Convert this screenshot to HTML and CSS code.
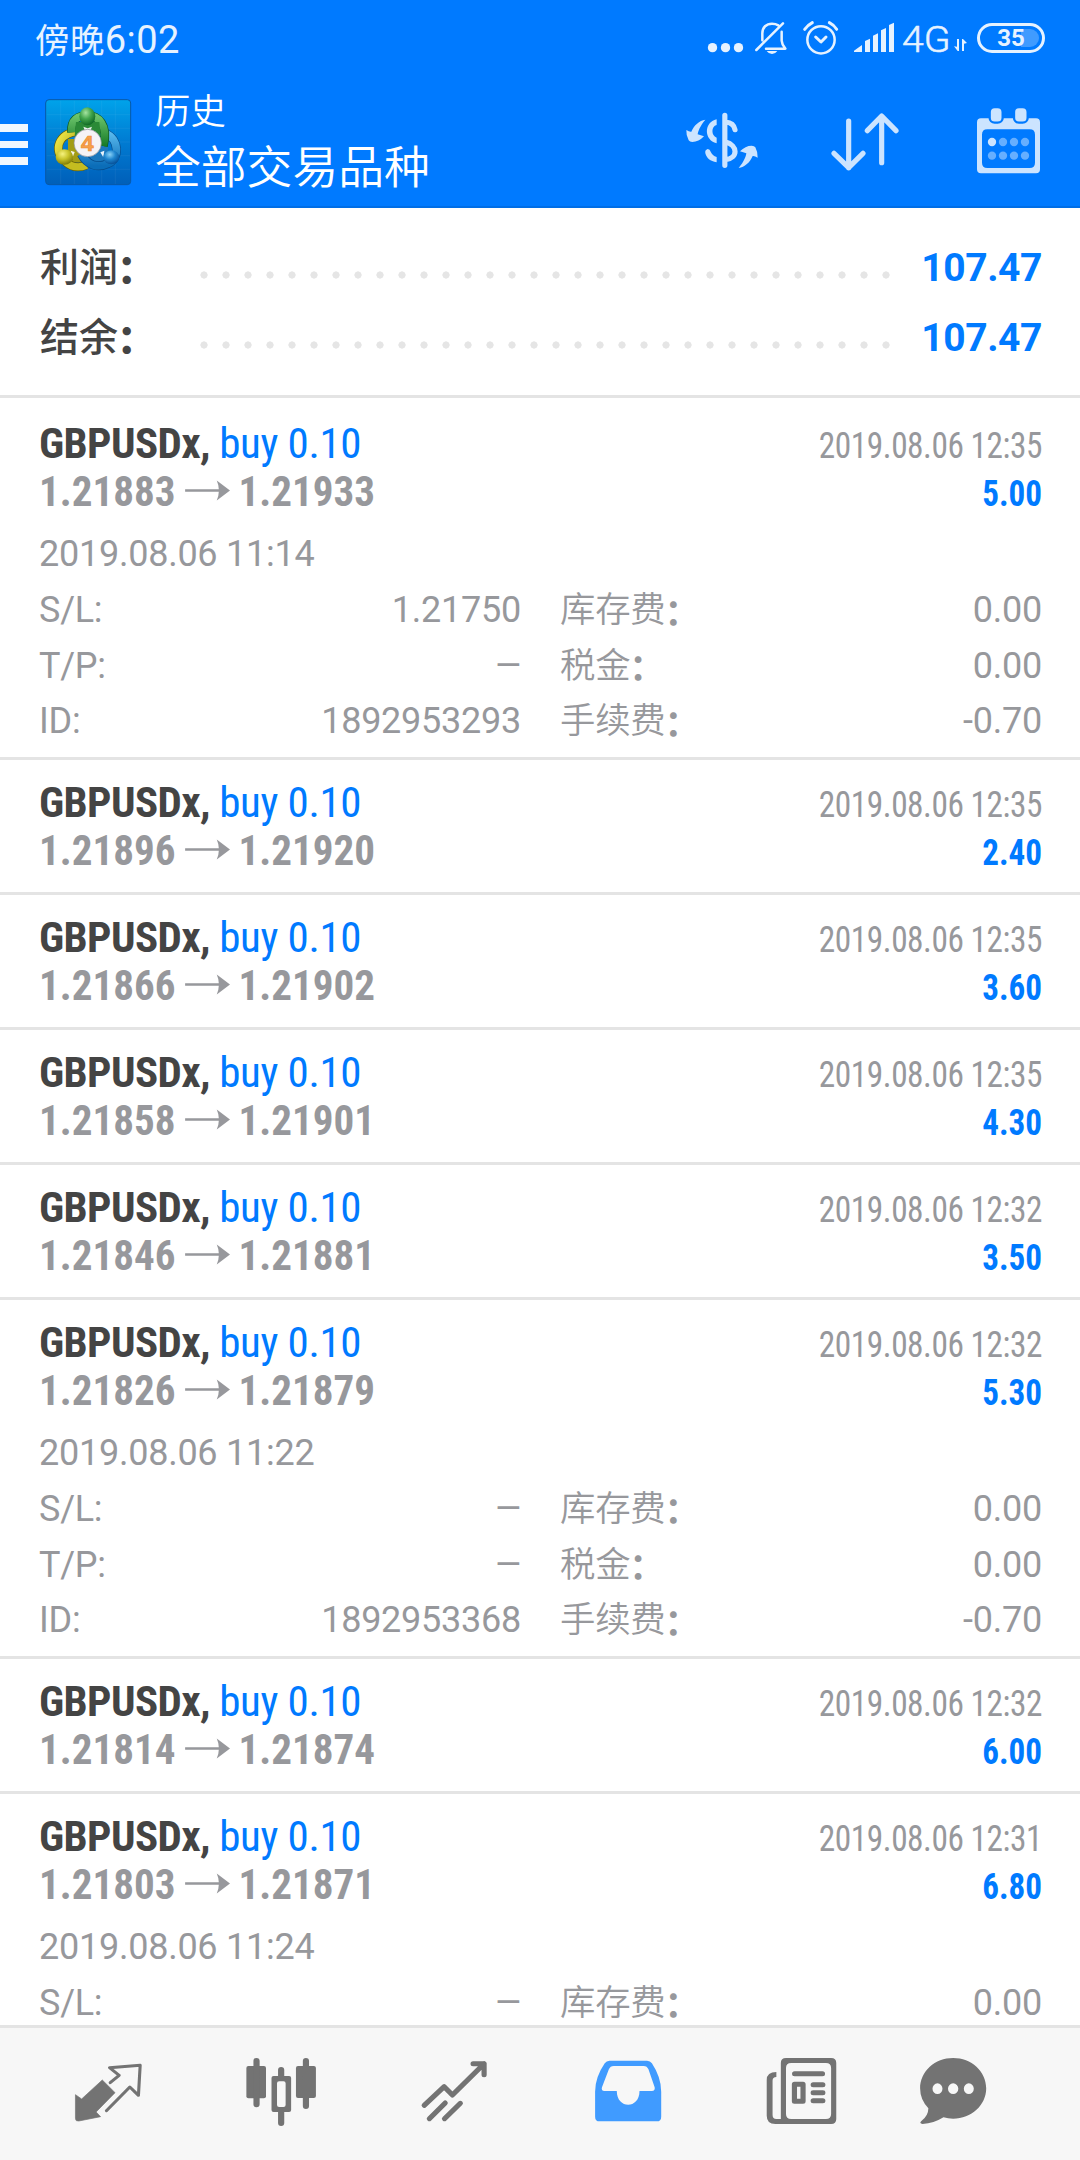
FILE: index.html
```html
<!DOCTYPE html>
<html lang="zh-CN">
<head>
<meta charset="utf-8">
<title>历史</title>
<link rel="stylesheet" href="styles.css">
</head>
<body>
<div class="app">
  <header class="header">
    <div class="status">
      <div class="clock"><span class="clock-period">傍晚</span>6:02</div>
      <div class="status-icons">
        <svg class="st-dots" viewBox="141 60 111 110"><circle cx="157.500" cy="143" r="14"/><circle cx="196.500" cy="143" r="14"/><circle cx="235.500" cy="143" r="14"/></svg>
        <svg class="st-bell" viewBox="282 60 102 110">
          <path class="line" d="M289 150 369 70M307 121V100C307 82 319 71 336 71Q347 71 355 76M365 95V122Q366 135 376 146H318"/>
          <path d="M320 153H352Q346 162 336 162T320 153Z"/>
        </svg>
        <svg class="st-alarm" viewBox="426 60 111 110">
          <circle class="line" cx="483" cy="119.500" r="41"/>
          <path class="line thick" d="M467 111 483 126 498 111"/>
          <path class="line thick" d="M434 88Q444 75 457 68M508 68Q522 75 530 88"/>
        </svg>
        <svg class="st-signal" viewBox="579 60 126 110"><path d="M582 156V152L606 135V156ZM615 156V123L630 116V156ZM639 156V107L654 100V156ZM663 156V91L678 84V156ZM687 156V75L702 68V156Z"/></svg>
        <span class="network">4G</span>
        <svg class="st-data" viewBox="879 60 45 110"><path d="M891 117H897V153H893L882 139 891 140ZM906 117H909L921 129 912 131V153H906Z"/></svg>
        <div class="battery"><span class="battery-text">35</span></div>
      </div>
    </div>
    <div class="toolbar">
      <div class="menu"><i></i><i></i><i></i></div>
      <svg class="logo" viewBox="12 12 264 264">
        <defs>
          <linearGradient id="tile" x1="0" y1="0" x2="0" y2="1"><stop offset="0" stop-color="#00a3ea"/><stop offset=".5" stop-color="#007bd2"/><stop offset="1" stop-color="#005fb9"/></linearGradient>
          <linearGradient id="green" x1="0" y1="0" x2="0" y2="1"><stop offset="0" stop-color="#6cc46b"/><stop offset="1" stop-color="#167a27"/></linearGradient>
          <linearGradient id="yellow" x1="0" y1="0" x2="1" y2="1"><stop offset="0" stop-color="#f2ea4a"/><stop offset="1" stop-color="#a59a0c"/></linearGradient>
          <linearGradient id="blue" x1="0" y1="0" x2="0" y2="1"><stop offset="0" stop-color="#58b8ec"/><stop offset="1" stop-color="#0b6db8"/></linearGradient>
          <radialGradient id="green-head" cx=".4" cy=".3" r=".7"><stop offset="0" stop-color="#a5e3a0"/><stop offset=".5" stop-color="#43a64d"/><stop offset="1" stop-color="#116a25"/></radialGradient>
          <radialGradient id="yellow-head" cx=".4" cy=".3" r=".7"><stop offset="0" stop-color="#f6f27e"/><stop offset=".5" stop-color="#c9c42a"/><stop offset="1" stop-color="#857f08"/></radialGradient>
          <radialGradient id="blue-head" cx=".4" cy=".3" r=".7"><stop offset="0" stop-color="#8bd2f7"/><stop offset=".5" stop-color="#1f86cf"/><stop offset="1" stop-color="#07519a"/></radialGradient>
        </defs>
        <rect x="17" y="17" width="255" height="255" rx="10" fill="url(#tile)" stroke="#0858a8" stroke-width="3"/>
        <path d="M62 20V270M103 20V270M144 20V270M185 20V270M226 20V270M20 62H270M20 103H270M20 144H270M20 185H270M20 226H270" stroke="#fff" stroke-opacity=".08" stroke-width="2"/>
        <path d="M84 135H120L135 195 118 206 84 204Z" fill="#a39c14"/>
        <path d="M204 135H170L150 195 176 206 204 204Z" fill="#1c78bd"/>
        <path d="M94 209C44 194 44 140 84 120Q98 112 114 114" fill="none" stroke="#665f05" stroke-width="26"/>
        <path d="M94 209C44 194 44 140 84 120Q98 112 114 114" fill="none" stroke="url(#yellow)" stroke-width="22"/>
        <path d="M76 203Q104 228 140 213" fill="none" stroke="#665f05" stroke-width="26"/>
        <path d="M76 203Q104 228 140 213" fill="none" stroke="#c4bc20" stroke-width="22"/>
        <path d="M196 118C240 136 238 195 205 208C172 224 142 213 124 180" fill="none" stroke="#064d8d" stroke-width="27"/>
        <path d="M196 118C240 136 238 195 205 208C172 224 142 213 124 180" fill="none" stroke="url(#blue)" stroke-width="23"/>
        <path d="M95 115C92 77 113 65 143 65S206 90 190 156" fill="none" stroke="#0b5420" stroke-width="27"/>
        <path d="M95 115C92 77 113 65 143 65S206 90 190 156" fill="none" stroke="url(#green)" stroke-width="23"/>
        <path d="M108 84H178L182 125H104Z" fill="#2b8a37"/>
        <path d="M130 98 143 103 156 98 152 108H134Z" fill="#e9f2ec"/>
        <path d="M92 170 104 174 98 190Z" fill="#f4f4e4"/>
        <path d="M193 170 181 175 190 190Z" fill="#eaf3fa"/>
        <ellipse cx="142" cy="67" rx="24" ry="27" fill="url(#green-head)"/>
        <ellipse cx="73" cy="189" rx="26" ry="23" fill="url(#yellow-head)"/>
        <ellipse cx="214" cy="190" rx="24" ry="21" fill="url(#blue-head)"/>
        <circle cx="143" cy="147" r="41" fill="#f5f3f5" stroke="#8b8c95" stroke-width="2"/>
        <text class="logo-digit" x="142" y="172" text-anchor="middle">4</text>
      </svg>
      <div class="titles"><div class="title">历史</div><div class="subtitle">全部交易品种</div></div>
      <div class="actions">
        <svg class="act-money" viewBox="15 5 222 204">
          <path d="M76 43C60 62 54 78 53 87L72 93Q56 110 37 110Q29 110 26 105Q18 90 19 74Q28 80 34 79C42 60 58 45 76 43Z"/>
          <path d="M76 43C60 62 54 78 53 87L72 93Q56 110 37 110Q29 110 26 105Q18 90 19 74Q28 80 34 79C42 60 58 45 76 43Z" transform="rotate(180 126 115.500)"/>
          <path d="M110 42C71 50 71 105 110 114V97C93 91 93 63 110 59Z"/>
          <path d="M110 171C90 168 80 158 76 144Q74 134 83 131Q90 131 92 139Q97 151 110 155Z"/>
          <path class="line" d="M134.500 30V180M137 50Q161 52 165 73M137 110C174 120 175 158 137 163"/>
        </svg>
        <svg class="act-sort" viewBox="513 320 204 204"><path class="line" d="M566 362V502M522 459 566 502 609 459M665 487V347M622 391 665 347 708 391"/></svg>
        <svg class="act-calendar" viewBox="948 320 195 204">
          <path fill-rule="evenodd" d="M963 354H1128Q1140 354 1140 366V507Q1140 519 1128 519H963Q951 519 951 507V366Q951 354 963 354ZM982 387Q966 387 966 403V487Q966 503 982 503H1109Q1125 503 1125 487V403Q1125 387 1109 387Z"/>
          <g class="rings"><rect x="989" y="320" width="39" height="47" rx="15"/><rect x="1062" y="320" width="41" height="47" rx="15"/></g>
          <circle cx="996" cy="425" r="12.500"/>
          <g class="days"><circle cx="1029" cy="425" r="12.500"/><circle cx="1062" cy="425" r="12.500"/><circle cx="1095" cy="425" r="12.500"/><circle cx="996" cy="466" r="12.500"/><circle cx="1029" cy="466" r="12.500"/><circle cx="1062" cy="466" r="12.500"/><circle cx="1095" cy="466" r="12.500"/></g>
        </svg>
      </div>
    </div>
  </header>

  <section class="summary">
    <div class="sum-row"><span class="sum-label">利润<span class="colon">：</span></span><span class="leader"></span><span class="sum-value">107.47</span></div>
    <div class="sum-row"><span class="sum-label">结余<span class="colon">：</span></span><span class="leader"></span><span class="sum-value">107.47</span></div>
  </section>

  <main class="deals">
    <article class="deal">
      <div class="row"><span class="symbol">GBPUSDx, <b>buy 0.10</b></span><span class="time">2019.08.06 12:35</span></div>
      <div class="row"><span class="prices">1.21883<svg class="arrow" viewBox="0 0 44 21" preserveAspectRatio="none"><path d="M0 9.300H33Q33 5 31 0.500L44 10.500 31 20.500Q33 16 33 11.700H0Z"/></svg>1.21933</span><span class="profit">5.00</span></div>
      <div class="details">
        <div class="opened">2019.08.06 11:14</div>
        <div class="pair"><span>S/L:</span><span>1.21750</span></div><div class="pair"><span class="cjk">库存费<span class="colon">：</span></span><span>0.00</span></div>
        <div class="pair"><span>T/P:</span><span class="dash">—</span></div><div class="pair"><span class="cjk">税金<span class="colon">：</span></span><span>0.00</span></div>
        <div class="pair"><span>ID:</span><span>1892953293</span></div><div class="pair"><span class="cjk">手续费<span class="colon">：</span></span><span>-0.70</span></div>
      </div>
    </article>
    <article class="deal">
      <div class="row"><span class="symbol">GBPUSDx, <b>buy 0.10</b></span><span class="time">2019.08.06 12:35</span></div>
      <div class="row"><span class="prices">1.21896<svg class="arrow" viewBox="0 0 44 21" preserveAspectRatio="none"><path d="M0 9.300H33Q33 5 31 0.500L44 10.500 31 20.500Q33 16 33 11.700H0Z"/></svg>1.21920</span><span class="profit">2.40</span></div>
    </article>
    <article class="deal">
      <div class="row"><span class="symbol">GBPUSDx, <b>buy 0.10</b></span><span class="time">2019.08.06 12:35</span></div>
      <div class="row"><span class="prices">1.21866<svg class="arrow" viewBox="0 0 44 21" preserveAspectRatio="none"><path d="M0 9.300H33Q33 5 31 0.500L44 10.500 31 20.500Q33 16 33 11.700H0Z"/></svg>1.21902</span><span class="profit">3.60</span></div>
    </article>
    <article class="deal">
      <div class="row"><span class="symbol">GBPUSDx, <b>buy 0.10</b></span><span class="time">2019.08.06 12:35</span></div>
      <div class="row"><span class="prices">1.21858<svg class="arrow" viewBox="0 0 44 21" preserveAspectRatio="none"><path d="M0 9.300H33Q33 5 31 0.500L44 10.500 31 20.500Q33 16 33 11.700H0Z"/></svg>1.21901</span><span class="profit">4.30</span></div>
    </article>
    <article class="deal">
      <div class="row"><span class="symbol">GBPUSDx, <b>buy 0.10</b></span><span class="time">2019.08.06 12:32</span></div>
      <div class="row"><span class="prices">1.21846<svg class="arrow" viewBox="0 0 44 21" preserveAspectRatio="none"><path d="M0 9.300H33Q33 5 31 0.500L44 10.500 31 20.500Q33 16 33 11.700H0Z"/></svg>1.21881</span><span class="profit">3.50</span></div>
    </article>
    <article class="deal">
      <div class="row"><span class="symbol">GBPUSDx, <b>buy 0.10</b></span><span class="time">2019.08.06 12:32</span></div>
      <div class="row"><span class="prices">1.21826<svg class="arrow" viewBox="0 0 44 21" preserveAspectRatio="none"><path d="M0 9.300H33Q33 5 31 0.500L44 10.500 31 20.500Q33 16 33 11.700H0Z"/></svg>1.21879</span><span class="profit">5.30</span></div>
      <div class="details">
        <div class="opened">2019.08.06 11:22</div>
        <div class="pair"><span>S/L:</span><span class="dash">—</span></div><div class="pair"><span class="cjk">库存费<span class="colon">：</span></span><span>0.00</span></div>
        <div class="pair"><span>T/P:</span><span class="dash">—</span></div><div class="pair"><span class="cjk">税金<span class="colon">：</span></span><span>0.00</span></div>
        <div class="pair"><span>ID:</span><span>1892953368</span></div><div class="pair"><span class="cjk">手续费<span class="colon">：</span></span><span>-0.70</span></div>
      </div>
    </article>
    <article class="deal">
      <div class="row"><span class="symbol">GBPUSDx, <b>buy 0.10</b></span><span class="time">2019.08.06 12:32</span></div>
      <div class="row"><span class="prices">1.21814<svg class="arrow" viewBox="0 0 44 21" preserveAspectRatio="none"><path d="M0 9.300H33Q33 5 31 0.500L44 10.500 31 20.500Q33 16 33 11.700H0Z"/></svg>1.21874</span><span class="profit">6.00</span></div>
    </article>
    <article class="deal">
      <div class="row"><span class="symbol">GBPUSDx, <b>buy 0.10</b></span><span class="time">2019.08.06 12:31</span></div>
      <div class="row"><span class="prices">1.21803<svg class="arrow" viewBox="0 0 44 21" preserveAspectRatio="none"><path d="M0 9.300H33Q33 5 31 0.500L44 10.500 31 20.500Q33 16 33 11.700H0Z"/></svg>1.21871</span><span class="profit">6.80</span></div>
      <div class="details">
        <div class="opened">2019.08.06 11:24</div>
        <div class="pair"><span>S/L:</span><span class="dash">—</span></div><div class="pair"><span class="cjk">库存费<span class="colon">：</span></span><span>0.00</span></div>
      </div>
    </article>
  </main>

  <nav class="tabs">
    <div class="tab"><svg viewBox="209 225 210 220" preserveAspectRatio="none">
      <path d="M297 300 334 338 279 396 292 410 229 423Q219 425 219 415V344L237 357Z" stroke="currentColor" stroke-width="2" stroke-linejoin="round"/>
      <path class="line" stroke-width="9" d="M320 308 346 286 318 263 407 256 402 346 377 321 309 392"/></svg></div>
    <div class="tab"><svg viewBox="711 225 210 220" preserveAspectRatio="none">
      <rect x="715" y="258" width="57" height="97" rx="6"/><rect x="859" y="258" width="58" height="96" rx="6"/>
      <path class="line" stroke-width="18" d="M744.500 243V373M888 243V378M816 270V290M816 396V429"/>
      <path fill-rule="evenodd" d="M794 288H839Q845 288 845 294V390Q845 396 839 396H794Q788 396 788 390V294Q788 288 794 288ZM810 304Q804 304 804 310V375Q804 381 810 381H823Q829 381 829 375V310Q829 304 823 304Z"/></svg></div>
    <div class="tab"><svg viewBox="1213 225 210 220" preserveAspectRatio="none"><path class="line" stroke-width="15" d="M1231 376 1289 320 1313 345 1405 251M1373 251H1405V284M1292 369 1246 416M1336 370 1290 416"/></svg></div>
    <div class="tab active"><svg viewBox="149 225 210 220" preserveAspectRatio="none"><path fill-rule="evenodd" d="M200 242H309Q318 242 323 250Q350 292 350 335V410Q350 424 337 424H171Q158 424 158 410V335Q158 292 186 250Q191 242 200 242ZM212 258Q202 258 198 268L178 322Q175 333 185 333H221C221 388 287 388 287 333H323Q333 333 331 322L313 268Q309 258 299 258Z"/></svg></div>
    <div class="tab"><svg viewBox="652 225 210 220" preserveAspectRatio="none">
      <path fill-rule="evenodd" d="M713 234H844Q859 234 859 249V417Q859 432 844 432H682Q657 432 657 407V300Q657 276 685 276V291Q674 291 674 302V405Q674 417 685 417H698V249Q698 234 713 234ZM728 249Q713 249 713 264V402Q713 417 728 417H829Q844 417 844 402V264Q844 249 829 249Z"/>
      <path class="line" stroke-width="15" d="M738 281H819M792 314H820M792 338H820M792 362H820"/>
      <rect class="line" stroke-width="15" x="737.500" y="313" width="25" height="51"/></svg></div>
    <div class="tab last"><svg viewBox="1094 225 210 220" preserveAspectRatio="none"><path fill-rule="evenodd" d="M1199 234C1252 234 1295 274 1295 325S1252 416 1199 416Q1184 416 1171 412Q1143 430 1110 432Q1100 431 1106 424Q1127 408 1127 385Q1103 359 1103 325C1103 274 1146 234 1199 234ZM1139 326A14.500 16 0 0 0 1168 326A14.500 16 0 0 0 1139 326ZM1184 326A15 16 0 0 0 1214 326A15 16 0 0 0 1184 326ZM1230 326A14.500 16 0 0 0 1259 326A14.500 16 0 0 0 1230 326Z"/></svg></div>
  </nav>
</div>
</body>
</html>
```
FILE: styles.css
```css
* { box-sizing: border-box; }
body { margin: 0; background: #fff; font-family: Roboto, "Noto Sans CJK SC", sans-serif; }
svg { display: block; flex: none; fill: currentColor; }
.line { fill: none; stroke: currentColor; stroke-linecap: round; stroke-linejoin: round; }
.app { width: 1080px; height: 2160px; display: flex; flex-direction: column; overflow: hidden; }

.header { flex: none; height: 208px; background: #007aff; border-bottom: 2px solid #006ee6; color: #fff; }
.status { height: 78px; display: flex; justify-content: space-between; padding: 0 35px 0 35px; color: #e6f2ff; }
.clock { font-size: 38px; line-height: 80px; white-space: nowrap; letter-spacing: .4px; }
.clock-period { font-size: 34.5px; }
.status-icons { display: flex; padding-top: 20px; }
.status-icons svg { height: 36.670px; }
.status-icons .line { stroke-width: 7.500; }
.status-icons .thick { stroke-width: 9; }
.st-dots { width: 37px; }
.st-bell { width: 34px; margin-left: 10px; }
.st-alarm { width: 37px; margin-left: 14px; }
.st-signal { width: 42px; margin-left: 14px; }
.network { width: 50px; margin-left: 7px; font-size: 37px; line-height: 40px; font-weight: 300; -webkit-text-stroke: .5px; transform: scaleX(1.06); transform-origin: left; white-space: nowrap; }
.st-data { width: 15px; margin-left: 1px; }
.battery { width: 68px; height: 30px; margin: 3px 0 0 9px; border: 3px solid #e6f2ff; border-radius: 15px; padding: 2.500px 3px; display: flex; justify-content: center; position: relative; }
.battery::after { content: ""; position: absolute; right: 3px; top: 3px; width: 18px; height: 18px; border-radius: 0 9px 9px 0; background: #409bff; }
.battery-text { position: relative; z-index: 1; font-size: 24px; line-height: 19px; font-weight: 700; }

.toolbar { display: flex; height: 128px; }
.menu { width: 27.500px; padding-top: 46px; display: flex; flex-direction: column; gap: 9px; }
.menu i { height: 7.500px; background: #f0f7ff; }
.logo { width: 88px; height: 88px; margin: 20px 0 0 16.500px; }
.logo-digit { font: 700 68px "Liberation Sans", sans-serif; stroke: #ee8a2b; stroke-width: 2; fill: #f6a04a; }
.titles { margin-left: 23px; padding-top: 8px; flex: 1; white-space: nowrap; font-family: "Noto Sans CJK SC", sans-serif; font-weight: 350; }
.title { font-size: 35.400px; line-height: 46px; }
.subtitle { font-size: 45.800px; line-height: 56px; margin-top: 4px; }
.actions { display: flex; padding: 28.670px 39px 0 0; color: #cce4ff; }
.actions svg { height: 68px; }
.actions .line { stroke-width: 15.500; }
.act-money { width: 74px; }
.act-sort { width: 68px; margin-left: 72px; }
.act-calendar { width: 65px; margin-left: 77px; }
.rings { stroke: #007aff; stroke-width: 7; }
.days { fill: #66afff; }
.colon { font-weight: 700; margin-left: -1px; position: relative; top: 2.500px; }

.summary { flex: none; height: 190px; padding: 24.500px 38px 0 40px; border-bottom: 3px solid #e4e4e4; }
.sum-row { display: flex; height: 70px; line-height: 70px; font-size: 39px; font-weight: 500; }
.sum-label { width: 152.500px; color: #444; font-family: "Noto Sans CJK SC", sans-serif; margin-top: -4px; }
.sum-label .colon { font-weight: 900; margin-left: -1px; }
.leader { width: 704px; height: 22px; margin-top: 31px; background: radial-gradient(circle at center, #e5e5e5 3.300px, transparent 3.900px) 0 0 / 22px 22px; }
.sum-value { flex: 1; text-align: right; color: #007aff; font-weight: 700; letter-spacing: -.4px; }

.deals { flex: 1; min-height: 0; overflow: hidden; }
.deal { padding: 18px 38px 18px 39px; border-bottom: 3px solid #e4e4e4; }
.deal:first-child { padding-top: 21px; }
.deal:last-child { padding-bottom: 0; border-bottom: 0; }
.row { display: flex; justify-content: space-between; align-items: baseline; height: 48px; line-height: 48px; white-space: nowrap; font-family: "Roboto Condensed", sans-serif; }
.symbol { font-size: 43px; font-weight: 700; color: #444; letter-spacing: -.600px; }
.symbol b { font-weight: 400; color: #007aff; letter-spacing: -.350px; }
.time { font-size: 36px; color: #97989c; letter-spacing: -.5px; transform: scaleX(.926); transform-origin: right; }
.prices { display: flex; align-items: baseline; font-size: 43px; font-weight: 700; color: #97989c; transform: scaleX(.955); transform-origin: left; }
.arrow { width: 47px; height: 21px; margin: 0 9px 0 10px; position: relative; top: -5px; }
.profit { font-size: 36px; font-weight: 700; color: #007aff; transform: scaleX(.92); transform-origin: right; }
.details { display: grid; grid-template-columns: 482px 1fr; column-gap: 39px; margin: 12px 0 -10.680px; font-size: 36px; letter-spacing: -.250px; color: #97989c; grid-template-rows: 56px; grid-auto-rows: 55.560px; line-height: 55.560px; }
.deal:last-child .details { margin-bottom: 0; }
.opened { grid-column: 1 / 3; }
.pair { display: flex; justify-content: space-between; align-items: baseline; white-space: nowrap; height: 55.560px; }
.dash { transform: scaleX(.92); transform-origin: right; }
.cjk { font-family: "Noto Sans CJK SC", sans-serif; font-size: 35.400px; line-height: 48px; font-weight: 350; }

.tabs { flex: none; height: 135px; display: flex; background: #f7f7f7; border-top: 3px solid #e4e4e4; padding: 27px 0 0 21.500px; color: #737373; }
.tab { width: 173.200px; display: flex; justify-content: center; }
.tab.last { width: 131px; }
.tab.active { color: #409bff; }
.tab svg { width: 72.300px; height: 73.330px; }
```
